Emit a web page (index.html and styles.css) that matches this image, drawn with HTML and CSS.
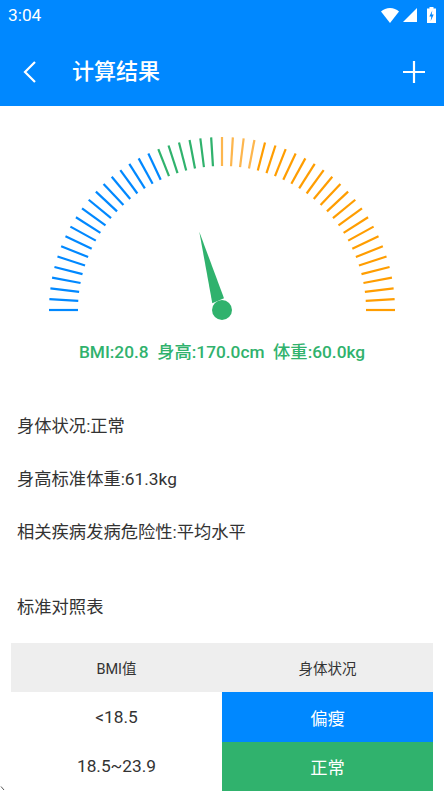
FILE: index.html
```html
<!DOCTYPE html>
<html lang="zh-CN">
<head>
    <meta charset="UTF-8">
    <meta name="viewport" content="width=device-width, initial-scale=1.0">
    <title>计算结果</title>
    <link rel="stylesheet" href="styles.css">
</head>
<body>
    <div class="page">
        <!-- 顶部 -->
        <header class="top">
            <div class="status-bar">
                <span class="time">3:04</span>
                <div class="status-icons">
                    <svg class="wifi" width="18" height="15" viewBox="0 0 18 15"><path d="M0 3.500C2.500 1.200 5.500 0 9 0S15.500 1.200 18 3.500L9 15z" fill="#fff"/></svg>
                    <svg class="signal" width="14" height="14" viewBox="0 0 14 14"><path d="M14 0V14H0z" fill="#fff"/></svg>
                    <svg class="battery" width="9" height="16" viewBox="0 0 9 16"><path d="M2.500 0H6.500V1.500H9V16H0V1.500H2.500z" fill="#fff"/><path d="M5.300 3.500L2.300 9.500H4.300L3.700 14L6.700 7.500H4.700z" fill="#0088ff"/></svg>
                </div>
            </div>
            <div class="app-bar">
                <svg class="back" width="16" height="24" viewBox="0 0 16 24"><path d="M13 2L3 12L13 22" fill="none" stroke="#fff" stroke-width="2.200"/></svg>
                <h1 class="title">计算结果</h1>
                <svg class="add" width="24" height="24" viewBox="0 0 24 24"><path d="M12 1V23M1 12H23" fill="none" stroke="#fff" stroke-width="2.200"/></svg>
            </div>
        </header>

        <!-- 仪表盘 -->
        <section class="gauge">
            <svg id="dial" class="dial" width="444" height="192" viewBox="0 0 444 192">
                <polygon points="199.300,101.700 212.300,173.300 224,168.300" fill="#30b26d"/>
                <circle cx="222" cy="180" r="10" fill="#30b26d"/>
            </svg>
            <p class="summary">BMI:20.8&nbsp; 身高:170.0cm&nbsp; 体重:60.0kg</p>
        </section>

        <!-- 结果 -->
        <section class="info">
            <p>身体状况:正常</p>
            <p>身高标准体重:61.3kg</p>
            <p>相关疾病发病危险性:平均水平</p>
        </section>

        <h2 class="table-title">标准对照表</h2>
        <div class="table">
            <div class="cell head">BMI值</div>
            <div class="cell head">身体状况</div>
            <div class="cell">&lt;18.5</div>
            <div class="cell thin">偏瘦</div>
            <div class="cell">18.5~23.9</div>
            <div class="cell normal">正常</div>
        </div>

        <svg class="corner" width="5" height="5" viewBox="0 0 5 5"><path d="M1 0.500L4 4" fill="none" stroke="#555" stroke-width="1"/></svg>
    </div>
    <script src="script.js"></script>
</body>
</html>
```

FILE: styles.css
```css
* {
    box-sizing: border-box;
}

html, body {
    margin: 0;
    padding: 0;
}

body {
    background: #fff;
    color: #333;
    font-family: Roboto, 'Noto Sans CJK SC', sans-serif;
}

.page {
    position: relative;
    width: 444px;
    height: 791px;
    overflow: hidden;
}

/* 顶部 */
.top {
    background: #0088ff;
    color: #fff;
}

.status-bar {
    height: 30px;
    padding: 0 8px;
    display: flex;
    align-items: center;
    justify-content: space-between;
}

.time {
    font-size: 17.3px;
}

.status-icons {
    display: flex;
    align-items: center;
}

.status-icons svg {
    display: block;
}

.signal {
    margin: 0 10px 0 4px;
}

.app-bar {
    height: 76px;
    padding: 8px 18px 0 22px;
    display: flex;
    align-items: center;
}

.title {
    margin: 0 0 0 34px;
    flex: 1;
    font-size: 22px;
    font-weight: 500;
    line-height: 30px;
}

/* 仪表盘 */
.dial {
    display: block;
    margin-top: 24px;
}

.summary {
    margin: 18px 0 0;
    text-align: center;
    color: #30b26d;
    font-size: 17.3px;
    font-weight: 500;
    line-height: 24px;
}

/* 结果 */
.info {
    margin-top: 35.5px;
    padding: 0 17px;
}

.info p {
    margin: 0;
    height: 53px;
    line-height: 53px;
    font-size: 17.3px;
}

.table-title {
    margin: 36.5px 0 0 17px;
    font-size: 17.3px;
    font-weight: 400;
    line-height: 24px;
}

/* 对照表 */
.table {
    margin: 24px 11px 0;
    display: grid;
    grid-template-columns: 211px 211px;
    grid-auto-rows: 49.4px;
}

.cell {
    display: flex;
    align-items: center;
    justify-content: center;
    font-size: 17.3px;
}

.head {
    background: #eeeeee;
    font-size: 14.5px;
}

.thin {
    background: #0088ff;
    color: #fff;
}

.normal {
    background: #30b26d;
    color: #fff;
}

/* 左下角的小记号 */
.corner {
    position: absolute;
    left: 0;
    bottom: 0;
}
```

FILE: script.js
```js
// 画刻度，共 51 根，每根 3.6 度
const dial = document.getElementById('dial');
const needle = dial.firstElementChild;
const cx = 222, cy = 180;

function tickColor(i) {
    if (i < 19) return '#0088ff';
    if (i < 25) return '#30b26d';
    if (i < 29) return '#fdb64e';
    return '#ff9d00';
}

for (let i = 0; i <= 50; i++) {
    const a = i * 3.6 * Math.PI / 180;
    const line = document.createElementNS('http://www.w3.org/2000/svg', 'line');
    line.setAttribute('x1', cx - 173 * Math.cos(a));
    line.setAttribute('y1', cy - 173 * Math.sin(a));
    line.setAttribute('x2', cx - 144 * Math.cos(a));
    line.setAttribute('y2', cy - 144 * Math.sin(a));
    line.setAttribute('stroke', tickColor(i));
    line.setAttribute('stroke-width', '2.2');
    dial.insertBefore(line, needle);
}
```
